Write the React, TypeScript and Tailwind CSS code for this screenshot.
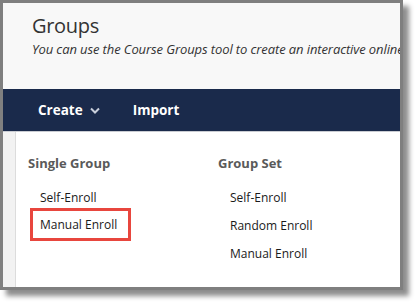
export default function App() {
  const font = { fontFamily: '"Open Sans", "Noto Sans", sans-serif' };
  return (
    <div className="w-[418px] h-[305px] bg-white relative overflow-hidden" style={font}>
      <div className="w-[403px] h-[290px] border-[3px] border-[#7f7f7f] shadow-[6px_6px_5px_rgba(0,0,0,0.45)] flex flex-col overflow-hidden bg-white">
        <div className="h-[86px] bg-[#f8f8f8] pl-[29px] pt-[9px] whitespace-nowrap overflow-hidden">
          <div className="text-[20px] tracking-[-0.3px] leading-[28px] text-[#333]">Groups</div>
          <div className="text-[13px] tracking-[-0.1px] italic leading-[18px] text-[#333] mt-[0px]">
            You can use the Course Groups tool to create an interactive online
          </div>
        </div>
        <div className="h-[43px] bg-[#1a2a4b] flex items-center pl-[35px] text-white font-bold text-[13.5px] border-b border-[#c9ccd2]">
          <div className="flex items-center gap-[7px]">
            <span>Create</span>
            <svg width="10" height="7" viewBox="0 0 10 7" className="mt-[1px]">
              <path d="M1 1.5 L5 5.5 L9 1.5" stroke="#c9cfdb" strokeWidth="2" fill="none" />
            </svg>
          </div>
          <span className="ml-[33px]">Import</span>
        </div>
        <div className="flex flex-1">
          <div className="w-[13px] bg-[#f2f2f2] border-r border-[#dcdcdc]" />
          <div className="flex-1 flex pt-[22px]">
            <div className="w-[190px] pl-[12px]">
              <div className="font-bold text-[13px] text-[#5a5a5a] leading-[18px]">Single Group</div>
              <div className="mt-[17px] pl-[12px] text-[12px] text-[#1a1a1a] leading-[18px]">Self-Enroll</div>
              <div className="mt-[1px] ml-[2px] w-[101px] h-[33px] border-[3px] border-[#e8463e] flex items-center pl-[7px] text-[12px] text-[#1a1a1a]">
                Manual Enroll
              </div>
            </div>
            <div className="pl-[12px]">
              <div className="font-bold text-[13px] text-[#5a5a5a] leading-[18px]">Group Set</div>
              <div className="mt-[17px] pl-[12px] text-[12px] text-[#1a1a1a] leading-[18px]">Self-Enroll</div>
              <div className="mt-[10px] pl-[12px] text-[12px] text-[#1a1a1a] leading-[18px]">Random Enroll</div>
              <div className="mt-[10px] pl-[12px] text-[12px] text-[#1a1a1a] leading-[18px]">Manual Enroll</div>
            </div>
          </div>
        </div>
      </div>
    </div>
  );
}
